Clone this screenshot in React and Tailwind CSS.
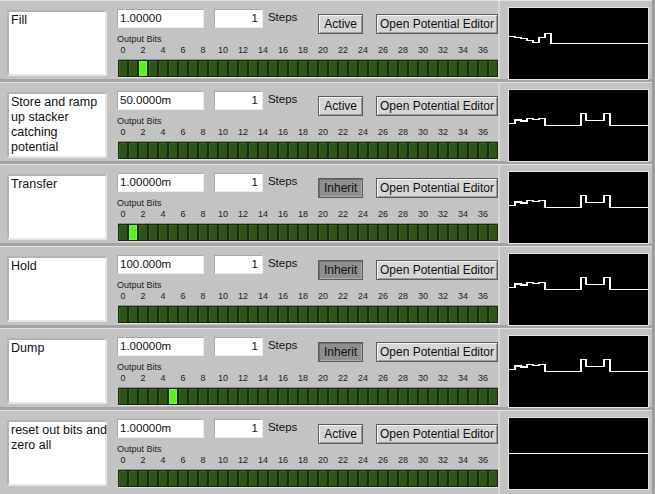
import React from 'react';

const stepped = [
  [0, 33.6], [6, 33.6], [6, 30], [12, 30], [12, 31], [18, 31], [18, 28.6], [24, 28.6],
  [24, 29.6], [30, 29.6], [30, 28.6], [36, 28.6], [36, 35.3], [72, 35.3], [72, 23.6],
  [77, 23.6], [77, 30.6], [95, 30.6], [95, 23.6], [101, 23.6], [101, 35.3], [139, 35.3],
];

const fillCurve = [
  [0, 28.3], [6, 28.3], [6, 29.3], [12, 29.3], [12, 30.6], [18, 30.6], [18, 32.6], [24, 32.6],
  [24, 34.6], [30, 34.6], [30, 29.3], [36, 29.3], [36, 25.6], [42, 25.6], [42, 35.6], [139, 35.6],
];

const flat = [[0, 35.6], [139, 35.6]];

const rows = [
  { label: ['Fill'], value: '1.00000', btn: 'Active', lit: 2, graph: fillCurve },
  { label: ['Store and ramp', 'up stacker', 'catching', 'potential'], value: '50.0000m', btn: 'Active', lit: -1, graph: stepped },
  { label: ['Transfer'], value: '1.00000m', btn: 'Inherit', lit: 1, graph: stepped },
  { label: ['Hold'], value: '100.000m', btn: 'Inherit', lit: -1, graph: stepped },
  { label: ['Dump'], value: '1.00000m', btn: 'Inherit', lit: 5, graph: stepped },
  { label: ['reset out bits and', 'zero all'], value: '1.00000m', btn: 'Active', lit: -1, graph: flat },
];

const bits = Array.from({ length: 38 }, (_, i) => i);

function Graph({ points }) {
  return (
    <div className="mt-[6px] ml-[8px] border border-[#e4e4e4] bg-black w-[141px] h-[73px]">
      <svg width="139" height="71" viewBox="0 0 139 71" shapeRendering="crispEdges">
        <polyline
          points={points.map(p => p.join(',')).join(' ')}
          fill="none"
          stroke="#ffffff"
          strokeWidth="1.6"
        />
      </svg>
    </div>
  );
}

function Row({ row, last }) {
  const pressed = row.btn === 'Inherit';
  return (
    <div className={`flex border-t border-t-[#e2e2e2] ${last ? 'h-[84px]' : 'h-[82px] border-b-[3px] border-b-[#a3a3a3]'}`}>
      {/* name */}
      <div className="ml-[7px] mt-[9px] w-[100px] h-[66px] bg-white border-2 border-t-[#b4b4b4] border-l-[#b4b4b4] border-b-[#e6e6e6] border-r-[#e6e6e6] px-[2px] pt-[1px] text-[12.5px] leading-[15px] text-[#111]">
        {row.label.map((l, i) => (
          <div key={i} className="whitespace-nowrap">{l}</div>
        ))}
      </div>

      {/* controls */}
      <div className="ml-[10px] w-[381px] flex flex-col">
        <div className="flex items-start h-[33px]">
          <div className="mt-[8px] w-[88px] h-[19px] bg-white border border-t-[#a8a8a8] border-l-[#a8a8a8] border-b-[#ececec] border-r-[#ececec] pl-[2px] text-[11.5px] leading-[17px] text-[#111]">
            {row.value}
          </div>
          <div className="mt-[8px] ml-[10px] w-[49px] h-[19px] bg-white border border-t-[#a8a8a8] border-l-[#a8a8a8] border-b-[#ececec] border-r-[#ececec] pr-[4px] text-right text-[11.5px] leading-[17px] text-[#111]">
            1
          </div>
          <div className="ml-[5px] mt-[9px] text-[11.5px] leading-[15px] text-[#111]">Steps</div>
          <button
            type="button"
            className={`ml-[21px] mt-[13px] w-[45px] h-[20px] border border-[#5c5c5c] whitespace-nowrap text-[12px] leading-[16px] text-[#111] ${pressed ? 'bg-[#8f8f8f] shadow-[inset_1px_1px_0_#6e6e6e,inset_-1px_-1px_0_#a8a8a8]' : 'bg-[#d6d6d6] shadow-[inset_1px_1px_0_#f6f6f6,inset_-1px_-1px_0_#9a9a9a]'}`}
          >
            {row.btn}
          </button>
          <button
            type="button"
            className="ml-[13px] mt-[13px] w-[123px] h-[20px] border border-[#5c5c5c] bg-[#d6d6d6] shadow-[inset_1px_1px_0_#f6f6f6,inset_-1px_-1px_0_#9a9a9a] whitespace-nowrap text-[12px] leading-[16px] text-[#111]"
          >
            Open Potential Editor
          </button>
        </div>
        <div className="text-[9px] leading-[9px] text-[#222] mt-[1px]">Output Bits</div>
        <div className="flex ml-[1px] h-[12px] text-[9px] leading-[12px] text-[#222]">
          {bits.map(i => (
            <div key={i} className="w-[10px] flex justify-center whitespace-nowrap">
              {i % 2 === 0 ? i : ''}
            </div>
          ))}
        </div>
        <div className="mt-[3px] ml-[1px] flex h-[19px] bg-[#1c2b12] border-t border-t-[#8d8d8d] border-b border-b-[#e0e0e0] w-[380px]">
          {bits.map(i => (
            <div
              key={i}
              className={`w-[10px] h-full border border-[#1a2a10] ${i === row.lit ? 'bg-[#5ef01c] shadow-[inset_0_0_2px_#b5ff8a]' : 'bg-[#2e5418] shadow-[inset_1px_1px_0_#3a6322]'}`}
            />
          ))}
        </div>
      </div>

      {/* plot */}
      <div className="flex border-l-2 border-l-[#d8d8d8]">
        <Graph points={row.graph} />
      </div>
    </div>
  );
}

export default function App() {
  return (
    <div
      className="w-[655px] h-[494px] overflow-hidden bg-[#c3c3c3] border-r-[3px] border-r-[#9d9d9d]"
      style={{ fontFamily: '"Liberation Sans", Arial, sans-serif' }}
    >
      {rows.map((r, i) => (
        <Row key={i} row={r} last={i === rows.length - 1} />
      ))}
    </div>
  );
}
